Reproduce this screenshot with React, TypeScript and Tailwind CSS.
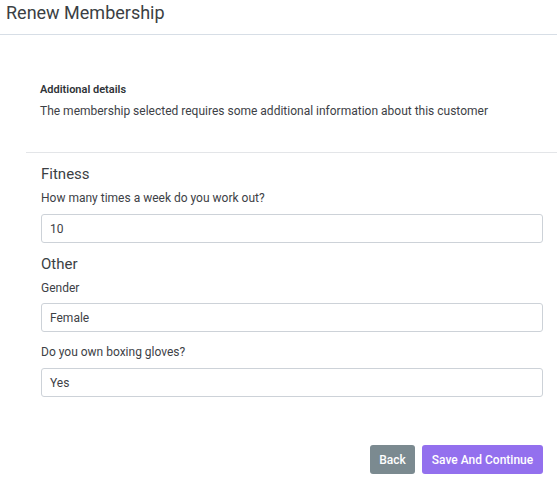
export default function App() {
  const font = { fontFamily: 'Roboto, "Liberation Sans", sans-serif' };
  return (
    <div className="min-h-screen bg-white text-[#3d4146]" style={font}>
      <div className="h-[35px] border-b border-[#d7dee6] px-[6px]">
        <h1 className="pt-[1px] text-[18px] leading-[24px] text-[#3b3f44]">Renew Membership</h1>
      </div>

      <div className="pl-[40px]">
        <p className="mt-[47px] text-[11px] font-semibold leading-[16px] text-[#2f3337]">Additional details</p>
        <p className="mt-[5px] text-[12px] leading-[16px] text-[#3d4146]">
          The membership selected requires some additional information about this customer
        </p>
      </div>

      <div className="ml-[26px] mt-[33px] border-t border-[#e3e5e8]" />

      <div className="pl-[41px] pr-[14px]">
        <h2 className="mt-[11px] text-[15px] leading-[20px] text-[#3b3f44]">Fitness</h2>
        <label className="mt-[6px] block text-[12px] leading-[16px]">How many times a week do you work out?</label>
        <div className="mt-[8px] flex h-[29px] items-center rounded-[3px] border border-[#cdd2d8] px-[8px] text-[12px]">10</div>

        <h2 className="mt-[11px] text-[15px] leading-[20px] text-[#3b3f44]">Other</h2>
        <label className="mt-[6px] block text-[12px] leading-[16px]">Gender</label>
        <div className="mt-[7px] flex h-[29px] items-center rounded-[3px] border border-[#cdd2d8] px-[8px] text-[12px]">Female</div>

        <label className="mt-[12px] block text-[12px] leading-[16px]">Do you own boxing gloves?</label>
        <div className="mt-[8px] flex h-[29px] items-center rounded-[3px] border border-[#cdd2d8] px-[8px] text-[12px]">Yes</div>

        <div className="mt-[48px] flex justify-end gap-[7px]">
          <button className="h-[29px] w-[45px] rounded-[3px] bg-[#7b8a90] text-[12px] font-medium text-white">Back</button>
          <button className="h-[29px] w-[121px] rounded-[3px] bg-[#9370ee] text-[12px] font-medium text-white">Save And Continue</button>
        </div>
      </div>
    </div>
  );
}
